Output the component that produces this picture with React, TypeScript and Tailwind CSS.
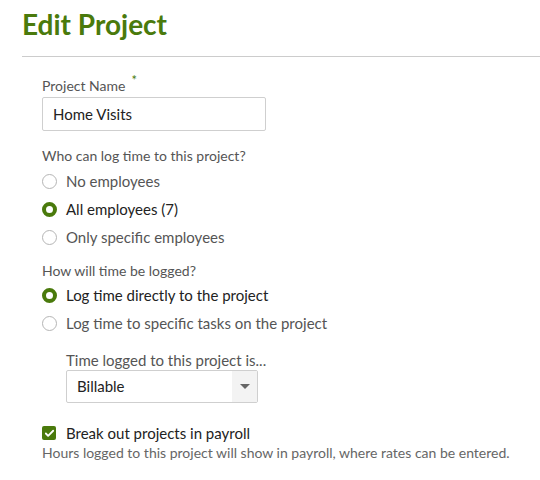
import { Check } from "lucide-react";

type Option = { label: string; checked?: boolean };

const whoOptions: Option[] = [
  { label: "No employees" },
  { label: "All employees (7)", checked: true },
  { label: "Only specific employees" },
];

const howOptions: Option[] = [
  { label: "Log time directly to the project", checked: true },
  { label: "Log time to specific tasks on the project" },
];

function Radio({ label, checked }: Option) {
  return (
    <div className="flex h-[28px] items-center gap-[9px]">
      {checked ? (
        <span className="h-[15px] w-[15px] shrink-0 rounded-full border-[4px] border-[#4a7a0c] bg-white" />
      ) : (
        <span className="h-[15px] w-[15px] shrink-0 rounded-full border border-[#b5b5b5] bg-white" />
      )}
      <span className={checked ? "text-[15px] text-[#222]" : "text-[15px] text-[#555]"}>{label}</span>
    </div>
  );
}

export default function App() {
  return (
    <div className="h-[480px] w-[540px] overflow-hidden bg-white font-['Lato','Open_Sans',sans-serif]">
      <div className="pl-[22px]">
        <h1 className="pt-[5px] text-[28px] font-bold leading-[38px] text-[#4a7a0c]">Edit Project</h1>
        <div className="mt-[13px] border-b border-[#cccccc]" />
      </div>

      <div className="pl-[42px] pt-[20px]">
        <label className="block text-[14px] leading-[18px] text-[#555]">
          Project Name<sup className="ml-[6px] text-[13px] text-[#4a7a0c]">*</sup>
        </label>
        <div className="mt-[2px] flex h-[34px] w-[224px] items-center rounded-[2px] border border-[#cfcfcf] px-[10px] text-[15px] text-[#222]">
          Home Visits
        </div>

        <p className="mt-[16px] text-[14px] leading-[18px] text-[#555]">Who can log time to this project?</p>
        <div className="mt-[2px]">
          {whoOptions.map((o) => (
            <Radio key={o.label} {...o} />
          ))}
        </div>

        <p className="mt-[11px] text-[14px] leading-[18px] text-[#555]">How will time be logged?</p>
        <div className="mt-[1px]">
          {howOptions.map((o) => (
            <Radio key={o.label} {...o} />
          ))}
        </div>

        <div className="pl-[24px] pt-[13px]">
          <p className="text-[15px] leading-[20px] text-[#555]">Time logged to this project is...</p>
          <div className="mt-0 flex h-[33px] w-[192px] items-stretch rounded-[2px] border border-[#cfcfcf]">
            <span className="flex flex-1 items-center pl-[10px] text-[15px] text-[#222]">Billable</span>
            <span className="flex w-[25px] items-center justify-center bg-[#f3f3f3]">
              <span className="h-0 w-0 border-x-[5px] border-t-[5px] border-x-transparent border-t-[#666]" />
            </span>
          </div>
        </div>

        <div className="mt-[20px] flex items-center gap-[10px]">
          <span className="flex h-[14px] w-[14px] shrink-0 items-center justify-center rounded-[2px] bg-[#4a7a0c]">
            <Check className="h-[11px] w-[11px] text-white" strokeWidth={4} />
          </span>
          <span className="text-[15px] leading-[20px] text-[#222]">Break out projects in payroll</span>
        </div>
        <p className="mt-[1px] text-[14px] leading-[18px] text-[#666]">
          Hours logged to this project will show in payroll, where rates can be entered.
        </p>
      </div>
    </div>
  );
}
